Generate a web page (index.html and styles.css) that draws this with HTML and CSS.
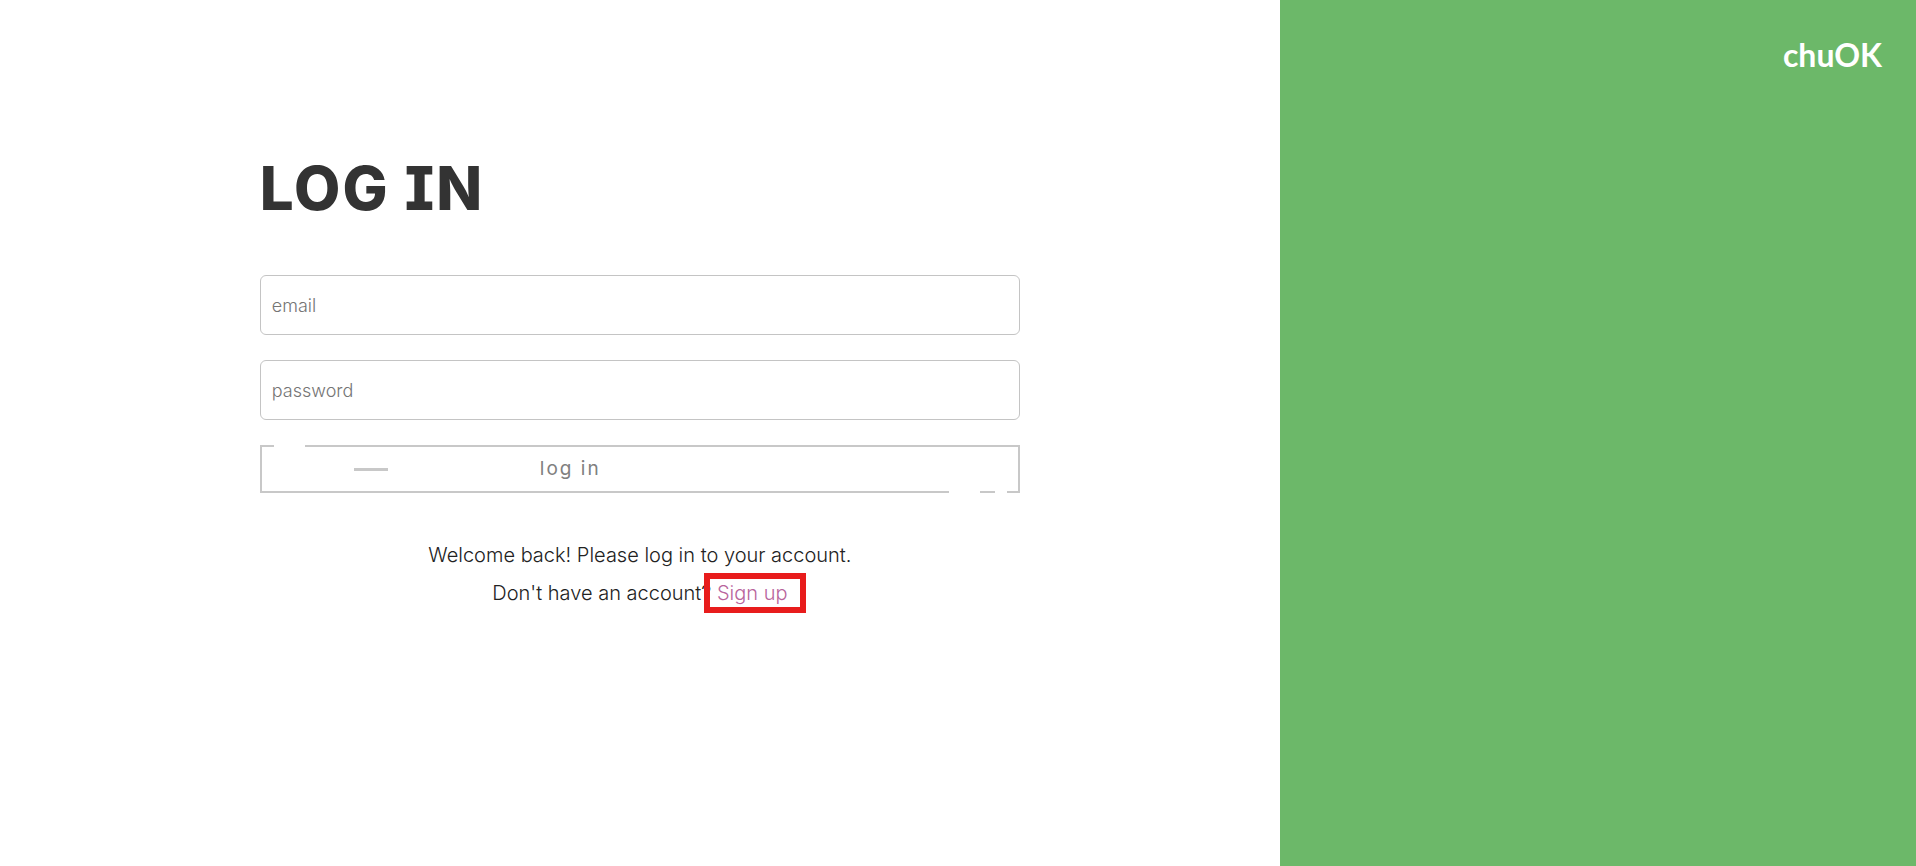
FILE: index.html
```html
<!DOCTYPE html>
<html lang="en">
<head>
<meta charset="utf-8">
<title>chuOK - Log in</title>
<link rel="stylesheet" href="styles.css">
</head>
<body>
<div class="page">
  <main class="login">
    <form class="form">
      <h1 class="title">LOG IN</h1>
      <input class="field" type="email" placeholder="email" aria-label="email">
      <input class="field" type="password" placeholder="password" aria-label="password">
      <button class="submit" type="submit">
        <span class="gap gap-top"></span>
        <span class="dash"></span>
        <span class="label">log in</span>
        <span class="gap gap-bottom"></span>
        <span class="gap gap-corner"></span>
      </button>
      <div class="notes">
        <p>Welcome back! Please log in to your account.</p>
        <p>Don't have an account? <a class="signup" href="#signup">Sign up</a></p>
      </div>
    </form>
  </main>
  <aside class="brand"><span class="logo">chuOK</span></aside>
</div>
</body>
</html>
```
FILE: styles.css
```css
* { box-sizing: border-box; }
body {
  margin: 0;
  background: #fff;
  color: #333;
  font-family: Inter, "Open Sans", sans-serif;
}
.page {
  display: grid;
  grid-template-columns: 66.8% 33.2%;
  min-height: 100vh;
}
.login {
  display: flex;
  justify-content: center;
  align-items: flex-start;
  padding-top: 148px;
}
.form {
  display: flex;
  flex-direction: column;
  gap: 25px;
  width: 59.4%;
}
.title {
  margin: 0 0 22px;
  font-size: 60px;
  line-height: 80px;
  font-weight: 800;
  letter-spacing: 2px;
  font-feature-settings: "ss02";
}
.field {
  width: 100%;
  height: 60px;
  padding: 0 11px;
  border: 1px solid #c4c4c4;
  border-radius: 6px;
  background: #fff;
  color: #333;
  font: 300 18px Inter, "Open Sans", sans-serif;
}
.field::placeholder { color: #757575; opacity: 1; }
.submit {
  position: relative;
  height: 48px;
  padding: 0 0 2px 278px;
  border: 2px solid #c8c8c8;
  background: transparent;
  color: #808080;
  font: 400 19px Inter, "Open Sans", sans-serif;
  letter-spacing: 2px;
  text-align: left;
}
.dash {
  position: absolute;
  top: 21px;
  left: 92px;
  width: 34px;
  height: 3px;
  background: #c8c8c8;
}
.gap {
  position: absolute;
  height: 2px;
  background: #fff;
}
.gap-top { top: -2px; left: 12px; width: 31px; }
.gap-bottom { bottom: -2px; right: 38px; width: 31px; }
.gap-corner { bottom: -2px; right: 11px; width: 12px; }
.notes {
  margin-top: 18px;
  font-size: 20px;
  font-weight: 300;
  line-height: 38px;
  text-align: center;
  color: #222;
}
.notes p { margin: 0; }
.signup {
  position: relative;
  color: #b8649c;
  text-decoration: none;
}
.signup::after {
  content: "";
  position: absolute;
  inset: -8px -18px -8px -13px;
  border: 6px solid #e81c1c;
}
.brand {
  display: flex;
  justify-content: flex-end;
  align-items: flex-start;
  padding: 35px 34px;
  background: #6cb869;
  color: #fff;
}
.logo {
  font: 700 32px/40px Lato, sans-serif;
}
```
